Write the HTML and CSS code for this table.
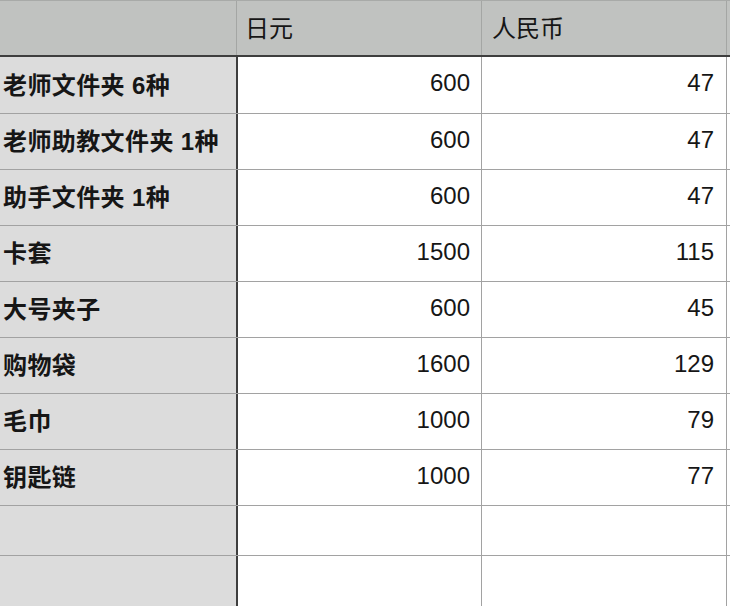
FILE: index.html
```html
<!DOCTYPE html>
<html lang="zh">
<head>
<meta charset="utf-8">
<title>价格表</title>
<link rel="stylesheet" href="styles.css">
</head>
<body>
<div class="sheet">
  <div class="row head">
    <div class="cell c1"></div>
    <div class="cell c2">日元</div>
    <div class="cell c3">人民币</div>
    <div class="cell c4"></div>
  </div>
  <div class="row first">
    <div class="cell c1">老师文件夹 6种</div>
    <div class="cell c2 num">600</div>
    <div class="cell c3 num">47</div>
    <div class="cell c4"></div>
  </div>
  <div class="row">
    <div class="cell c1">老师助教文件夹 1种</div>
    <div class="cell c2 num">600</div>
    <div class="cell c3 num">47</div>
    <div class="cell c4"></div>
  </div>
  <div class="row">
    <div class="cell c1">助手文件夹 1种</div>
    <div class="cell c2 num">600</div>
    <div class="cell c3 num">47</div>
    <div class="cell c4"></div>
  </div>
  <div class="row">
    <div class="cell c1">卡套</div>
    <div class="cell c2 num">1500</div>
    <div class="cell c3 num">115</div>
    <div class="cell c4"></div>
  </div>
  <div class="row">
    <div class="cell c1">大号夹子</div>
    <div class="cell c2 num">600</div>
    <div class="cell c3 num">45</div>
    <div class="cell c4"></div>
  </div>
  <div class="row">
    <div class="cell c1">购物袋</div>
    <div class="cell c2 num">1600</div>
    <div class="cell c3 num">129</div>
    <div class="cell c4"></div>
  </div>
  <div class="row">
    <div class="cell c1">毛巾</div>
    <div class="cell c2 num">1000</div>
    <div class="cell c3 num">79</div>
    <div class="cell c4"></div>
  </div>
  <div class="row">
    <div class="cell c1">钥匙链</div>
    <div class="cell c2 num">1000</div>
    <div class="cell c3 num">77</div>
    <div class="cell c4"></div>
  </div>
  <div class="row short">
    <div class="cell c1"></div>
    <div class="cell c2 num"></div>
    <div class="cell c3 num"></div>
    <div class="cell c4"></div>
  </div>
  <div class="row">
    <div class="cell c1"></div>
    <div class="cell c2 num"></div>
    <div class="cell c3 num"></div>
    <div class="cell c4"></div>
  </div>
</div>
</body>
</html>
```
FILE: styles.css
```css
html, body {
  margin: 0;
  padding: 0;
  background: #ffffff;
  overflow: hidden;
}

.sheet {
  width: 730px;
  font-family: "Liberation Sans", "Noto Sans CJK SC", sans-serif;
  font-size: 24px;
  color: #161616;
}

.row {
  display: grid;
  grid-template-columns: 238px 244px 245px 1fr;
  height: 56px;
  border-bottom: 1px solid #a2a2a2;
  box-sizing: border-box;
}

.row.first {
  height: 57px;
}

.row.short {
  height: 50px;
}

.cell {
  display: flex;
  align-items: center;
  box-sizing: border-box;
  border-right: 1px solid #a2a2a2;
  white-space: nowrap;
  overflow: hidden;
  padding-bottom: 4px;
}

.c1 {
  background: #dcdcdc;
  border-right: 2px solid #3e3e3e;
  padding-left: 3px;
  font-weight: bold;
  letter-spacing: 0.4px;
}

.c4 {
  border-right: none;
}

.num {
  justify-content: flex-end;
}

.c2.num {
  padding-right: 11px;
}

.c3.num {
  padding-right: 12px;
}

.head {
  background: #c0c2c0;
  border-top: 1px solid #a8aaa8;
  border-bottom: 2px solid #3e3e3e;
  height: 57px;
}

.head .cell {
  background: #c0c2c0;
  border-right-color: #a4a6a4;
  font-weight: normal;
  padding-bottom: 3px;
}

.head .c1 {
  border-right: 1px solid #a4a6a4;
  margin-right: 1px;
  letter-spacing: 0;
}

.head .c2 {
  padding-left: 7px;
}

.head .c3 {
  padding-left: 10px;
}
```
